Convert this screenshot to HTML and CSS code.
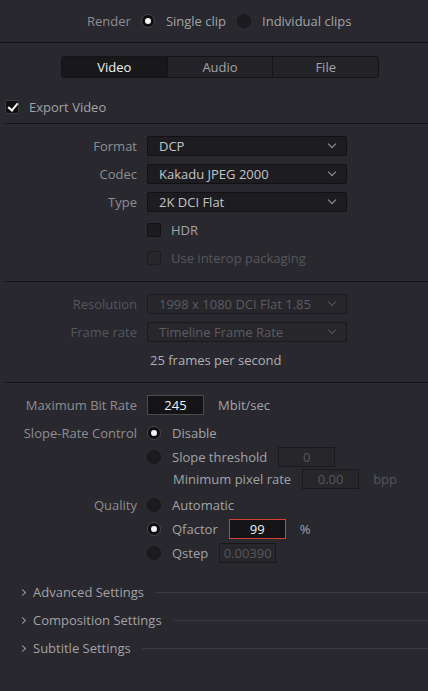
FILE: index.html
```html
<!DOCTYPE html>
<html lang="en">
<head>
    <meta charset="UTF-8">
    <meta name="viewport" content="width=device-width, initial-scale=1.0">
    <title>Render Settings</title>
    <link rel="stylesheet" href="styles.css">
</head>
<body>
    <!-- Render mode -->
    <div class="render-bar">
        <span class="muted">Render</span>
        <span class="radio on"></span>
        <span>Single clip</span>
        <span class="radio"></span>
        <span>Individual clips</span>
    </div>

    <div class="tabs">
        <div class="tab active">Video</div>
        <div class="tab">Audio</div>
        <div class="tab">File</div>
    </div>

    <div class="export-row">
        <span class="checkbox on"></span>
        <span>Export Video</span>
    </div>

    <!-- Format -->
    <div class="section first">
        <div class="row">
            <span class="label">Format</span>
            <div class="select">DCP<span class="chev"></span></div>
        </div>
        <div class="row">
            <span class="label">Codec</span>
            <div class="select">Kakadu JPEG 2000<span class="chev"></span></div>
        </div>
        <div class="row">
            <span class="label">Type</span>
            <div class="select">2K DCI Flat<span class="chev"></span></div>
        </div>
        <div class="row">
            <span class="label"></span>
            <span class="checkbox"></span>
            <span class="check-text">HDR</span>
        </div>
        <div class="row disabled">
            <span class="label"></span>
            <span class="checkbox"></span>
            <span class="check-text">Use interop packaging</span>
        </div>
    </div>

    <!-- Resolution -->
    <div class="section second">
        <div class="row disabled">
            <span class="label">Resolution</span>
            <div class="select">1998 x 1080 DCI Flat 1.85<span class="chev"></span></div>
        </div>
        <div class="row disabled">
            <span class="label">Frame rate</span>
            <div class="select">Timeline Frame Rate<span class="chev"></span></div>
        </div>
        <div class="row">
            <span class="label"></span>
            <span class="fps">25 frames per second</span>
        </div>
    </div>

    <!-- Quality -->
    <div class="section third">
        <div class="row">
            <span class="label">Maximum Bit Rate</span>
            <input class="field" type="text" value="245">
            <span class="unit">Mbit/sec</span>
        </div>
        <div class="row r-disable">
            <span class="label">Slope-Rate Control</span>
            <span class="radio on"></span>
            <span class="opt">Disable</span>
        </div>
        <div class="row r-tight">
            <span class="label"></span>
            <span class="radio"></span>
            <span class="opt">Slope threshold</span>
            <input class="field off" type="text" value="0">
        </div>
        <div class="row r-min">
            <span class="label"></span>
            <span class="opt indent">Minimum pixel rate</span>
            <input class="field off" type="text" value="0.00">
            <span class="unit off">bpp</span>
        </div>
        <div class="row r-quality">
            <span class="label">Quality</span>
            <span class="radio"></span>
            <span class="opt">Automatic</span>
        </div>
        <div class="row r-tight">
            <span class="label"></span>
            <span class="radio on"></span>
            <span class="opt">Qfactor</span>
            <input class="field error" type="text" value="99">
            <span class="unit">%</span>
        </div>
        <div class="row r-tight">
            <span class="label"></span>
            <span class="radio"></span>
            <span class="opt">Qstep</span>
            <input class="field off" type="text" value="0.00390">
        </div>
    </div>

    <!-- Collapsed groups -->
    <div class="groups">
        <div class="group"><span class="arrow"></span><span>Advanced Settings</span><span class="rule"></span></div>
        <div class="group"><span class="arrow"></span><span>Composition Settings</span><span class="rule"></span></div>
        <div class="group"><span class="arrow"></span><span>Subtitle Settings</span><span class="rule"></span></div>
    </div>
</body>
</html>
```

FILE: styles.css
```css
body {
    font-family: "Open Sans", "Liberation Sans", sans-serif;
    font-size: 13px;
    background-color: #28282e;
    color: #a3a3a6;
    margin: 0;
    padding: 0;
    overflow: hidden;
}

.muted {
    color: #8e8e92;
}

/* render mode bar */
.render-bar {
    height: 42px;
    display: flex;
    align-items: center;
    padding-left: 87px;
    border-bottom: 1px solid #141416;
}

.render-bar .radio {
    margin: 0 11px 0 10px;
}

.render-bar .radio + span + .radio {
    margin-left: 11px;
}

.radio {
    width: 14px;
    height: 14px;
    border-radius: 50%;
    background-color: #1c1c20;
    box-sizing: border-box;
    border: 1px solid #18181b;
    flex: none;
    position: relative;
}

.radio.on {
    background-color: #0f0f11;
    border-color: #47474c;
}

.radio.on::after {
    content: "";
    position: absolute;
    left: 3px;
    top: 3px;
    width: 6px;
    height: 6px;
    border-radius: 50%;
    background-color: #f2f2f2;
}

/* tabs */
.tabs {
    display: flex;
    width: 318px;
    height: 22px;
    margin: 13px 0 0 61px;
    box-sizing: border-box;
    border: 1px solid #141416;
    border-radius: 3px;
    background-color: #232327;
    overflow: hidden;
}

.tab {
    flex: 1;
    display: flex;
    align-items: center;
    justify-content: center;
    color: #a3a3a6;
    border-left: 1px solid #141416;
}

.tab:first-child {
    border-left: none;
}

.tab.active {
    background-color: #18181b;
    color: #f0f0f0;
}

/* export row */
.export-row {
    display: flex;
    align-items: center;
    height: 14px;
    margin-top: 22px;
    padding-left: 5px;
}

.export-row .checkbox {
    margin-right: 10px;
}

.checkbox {
    width: 14px;
    height: 14px;
    box-sizing: border-box;
    border: 1px solid #111113;
    border-radius: 2px;
    background-color: #1c1c20;
    flex: none;
    position: relative;
}

.checkbox.on {
    background-color: #0f0f11;
    border-color: #3c3c40;
}

.checkbox.on::after {
    content: "";
    position: absolute;
    left: 4px;
    top: 0px;
    width: 4px;
    height: 8px;
    border: solid #f4f4f4;
    border-width: 0 2px 2px 0;
    transform: rotate(40deg);
}

/* sections */
.section {
    margin-left: 5px;
    border-top: 1px solid #141416;
}

.section.first {
    margin-top: 9px;
    padding: 12px 0 5px;
}

.section.second {
    padding: 12px 0 4px;
}

.section.third {
    padding: 12px 0 0;
}

.row {
    display: flex;
    align-items: center;
    height: 20px;
    margin-bottom: 8px;
}

.label {
    width: 132px;
    margin-right: 10px;
    text-align: right;
    color: #8e8e92;
    flex: none;
}

.select {
    width: 200px;
    height: 20px;
    box-sizing: border-box;
    border: 1px solid #111113;
    border-radius: 2px;
    background-color: #1d1d21;
    color: #c4c4c6;
    padding-left: 11px;
    display: flex;
    align-items: center;
    position: relative;
}

.chev {
    position: absolute;
    right: 11px;
    top: 4px;
    width: 5px;
    height: 5px;
    border: solid #9a9a9d;
    border-width: 0 1.5px 1.5px 0;
    transform: rotate(45deg);
}

.check-text {
    margin-left: 10px;
    color: #a3a3a6;
}

.disabled .label,
.disabled .check-text {
    color: #56565b;
}

.disabled .select {
    background-color: #26262b;
    border-color: #1a1a1d;
    color: #5c5c61;
}

.disabled .chev {
    border-color: #56565b;
}

.disabled .checkbox {
    background-color: #27272b;
    border-color: #1d1d20;
}

.fps {
    margin-left: 3px;
    color: #b0b0b3;
}

/* quality block */
.opt {
    margin-left: 11px;
    color: #a3a3a6;
}

.opt.indent {
    margin-left: 26px;
}

.field {
    width: 57px;
    height: 20px;
    box-sizing: border-box;
    border: 1px solid #4a4a4f;
    background-color: #141416;
    color: #f0f0f0;
    font-family: inherit;
    font-size: 13px;
    text-align: center;
    padding: 0;
    margin-left: 11px;
    outline: none;
}

.row .label + .field {
    margin-left: 0;
}

.field.off {
    background-color: #26262b;
    border-color: #1a1a1d;
    color: #58585d;
}

.field.error {
    border-color: #d4402f;
}

.unit {
    margin-left: 14px;
    color: #a3a3a6;
}

.unit.off {
    color: #56565b;
}

.row.r-disable {
    margin-top: 0;
    margin-bottom: 4px;
}

.row.r-tight {
    margin-bottom: 4px;
}

.r-disable + .r-tight {
    margin-bottom: 2px;
}

.row.r-min {
    margin-bottom: 6px;
}

.row.r-quality {
    margin-bottom: 4px;
}

.section.third .row:last-child {
    margin-bottom: 0;
}

/* collapsed groups */
.groups {
    margin-top: 19px;
}

.group {
    display: flex;
    align-items: center;
    height: 20px;
    margin-bottom: 8px;
    padding-left: 20px;
    color: #a3a3a6;
}

.arrow {
    width: 4px;
    height: 4px;
    border: solid #9a9a9d;
    border-width: 1.5px 1.5px 0 0;
    transform: rotate(45deg);
    margin-right: 8px;
}

.rule {
    flex: 1;
    height: 1px;
    background-color: #3a3a40;
    margin-left: 11px;
}
```
